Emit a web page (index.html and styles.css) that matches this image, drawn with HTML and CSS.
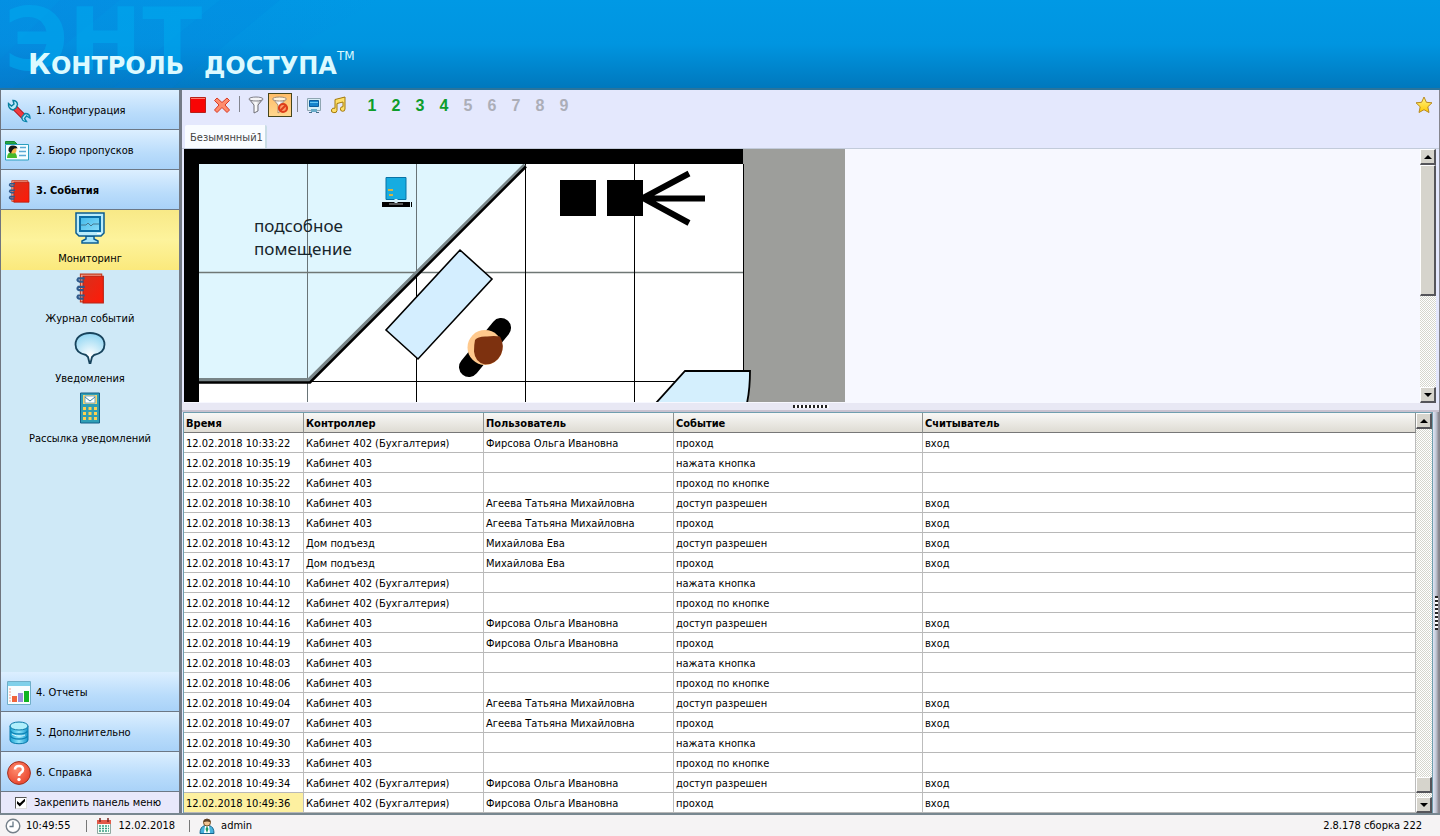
FILE: index.html
```html
<!DOCTYPE html>
<html lang="ru">
<head>
<meta charset="utf-8">
<title>Контроль доступа</title>
<link rel="stylesheet" href="styles.css">
</head>
<body>
<svg class="defs" aria-hidden="true">
  <defs>
    <linearGradient id="screen" x1="0" y1="0" x2="1" y2="1"><stop offset="0" stop-color="#3fb8ea"/><stop offset="1" stop-color="#8adcf8"/></linearGradient>
    <linearGradient id="cyl" x1="0" x2="1"><stop offset="0" stop-color="#1ba4d4"/><stop offset=".5" stop-color="#8fe4fb"/><stop offset="1" stop-color="#1596cc"/></linearGradient>
    <radialGradient id="bubble" cx=".5" cy=".75" r=".8"><stop offset="0" stop-color="#ffffff"/><stop offset="1" stop-color="#8ad3f2"/></radialGradient>
    <radialGradient id="help" cx=".4" cy=".35" r=".7"><stop offset="0" stop-color="#ff8b6d"/><stop offset="1" stop-color="#e8432c"/></radialGradient>
    <linearGradient id="book" x1="0" y1="0" x2="1" y2="1"><stop offset="0" stop-color="#d8301c"/><stop offset="1" stop-color="#ff1a08"/></linearGradient>
    <linearGradient id="gold" x1="0" y1="0" x2="0" y2="1"><stop offset="0" stop-color="#fff68a"/><stop offset="1" stop-color="#ffc800"/></linearGradient>
    <linearGradient id="metal" x1="0" x2="1"><stop offset="0" stop-color="#c9c9cf"/><stop offset=".5" stop-color="#ffffff"/><stop offset="1" stop-color="#8e8e96"/></linearGradient>
    <linearGradient id="ray" x1="0" x2="1"><stop offset="0" stop-color="#0b7fe0" stop-opacity=".35"/><stop offset="1" stop-color="#0b7fe0" stop-opacity="0"/></linearGradient>
    <symbol id="i-book" viewBox="0 0 28 30">
      <path d="M5 2h20v26H5z" fill="#f7a18c" stroke="#c53a1c"/>
      <path d="M7.500 4h19v25h-19z" fill="url(#book)" stroke="#b82010"/>
      <g fill="none" stroke="#2f5a8c" stroke-width="2"><path d="M9 6H3q-2 2 1 3h4M9 14H3q-2 2 1 3h4M9 22H3q-2 2 1 3h4"/></g>
    </symbol>
  </defs>
</svg>

<header class="banner">
  <svg class="banner-rays" viewBox="0 0 420 90" aria-hidden="true">
    <path d="M0 0h380L300 45l50 45H0z" fill="url(#ray)"/>
    <path d="M60 0h60L10 90H0V60z" fill="#0b7fe0" opacity=".15"/>
    <path d="M220 0h60L170 90h-60z" fill="#0b7fe0" opacity=".12"/>
  </svg>
  <span class="watermark" aria-hidden="true">ЭНТ</span>
  <h1 class="brand"><span><span class="cap">К</span>онтроль</span> <span>доступа<sup>TM</sup></span></h1>
</header>

<div class="workspace">
  <aside class="sidebar">
    <nav class="menu">
      <button class="section">
        <svg class="icon24" viewBox="0 0 24 24"><path d="M7 8l10 10" stroke="#a3101b" stroke-width="6"/><path d="M7 8l10 10" stroke="#f03a3e" stroke-width="4"/><path d="M1.500 4.500l3 2.500 2.500-2-1-3.500q4 0 4.500 4L9 9 6 11Q1 9.500 1.500 4.500z" fill="#b8edfb" stroke="#087f9f" stroke-width="1.400"/><path d="M15 18l3-3.500q5 0 5 4.500l-3.500-2-2 2.500 2 3q-5 0-4.500-4.500z" fill="#b8edfb" stroke="#0b86ad" stroke-width="1.400"/></svg>
        <span>1. Конфигурация</span>
      </button>
      <button class="section">
        <svg class="icon24 card" viewBox="0 0 24 24"><path d="M.5 5V2.500h9L12 5z" fill="#28a745" stroke="#168a36"/><path d="M.5 5.500h23v15.500H.5z" fill="#f4feff" stroke="#2a9fc0"/><path d="M2 19q0-6 5-6t5 6z" fill="#45b92a"/><circle cx="8" cy="11" r="3.500" fill="#f5b547"/><path d="M3.500 12Q3 6.500 8 6.500q4 0 4.500 3-5-1-6.500 5z" fill="#161616"/><path d="M15 8.500h6M14 12.500h7M14 16.500h7" stroke="#58a9d4" stroke-width="1.500"/></svg>
        <span>2. Бюро пропусков</span>
      </button>
      <button class="section current">
        <svg class="icon24"><use href="#i-book"/></svg>
        <span>3. События</span>
      </button>
      <div class="subitems">
        <button class="sub selected">
          <svg class="icon32" viewBox="0 0 32 32"><path d="M12 24h8v3l4 2v2H8v-2l4-2z" fill="#a6e6fb" stroke="#0c5f94" stroke-width="1.500"/><path d="M2 1h28v20l-3 3H5l-3-3z" fill="#b9ecfb" stroke="#0b5c90" stroke-width="1.500"/><path d="M6 5h20v14H6z" fill="url(#screen)" stroke="#0b6ea6" stroke-width="2"/><path d="M7 13h5l2-2 3 3 2-2h6" fill="none" stroke="#47788f"/><path d="M23 21.500h4" stroke="#fff"/></svg>
          <span>Мониторинг</span>
        </button>
        <button class="sub">
          <svg class="icon32"><use href="#i-book"/></svg>
          <span>Журнал событий</span>
        </button>
        <button class="sub">
          <svg class="icon32" viewBox="0 0 32 32"><path d="M16 1C7 1 1.500 6 1.500 12.500S7 22 12 23l2 2 1.500 6h1L18 25l2-2c5-1 10.500-4 10.500-10.500S25 1 16 1z" fill="url(#bubble)" stroke="#17435c" stroke-width="1.800"/></svg>
          <span>Уведомления</span>
        </button>
        <button class="sub">
          <svg class="icon32" viewBox="0 0 32 32"><path d="M6.500 1h19v30h-19z" fill="#2f9eb5" stroke="#145f87"/><path d="M9 3h14v9H9z" fill="#f7d56e"/><path d="M11 4h10v7H11z" fill="#fff" stroke="#77a8c0"/><path d="M11 5l5 4 5-4" fill="none" stroke="#3c83a7"/><g fill="#ffd04e"><path d="M9 15h3v3H9zM14.500 15h3v3h-3zM20 15h3v3h-3zM9 20h3v3H9zM14.500 20h3v3h-3zM20 20h3v3h-3zM9 25h3v3H9zM14.500 25h3v3h-3zM20 25h3v3h-3z"/></g></svg>
          <span>Рассылка уведомлений</span>
        </button>
      </div>
      <button class="section">
        <svg class="icon24" viewBox="0 0 24 24"><path d="M.5.5h23v23H.5z" fill="#f8fdff" stroke="#6faec8"/><path d="M1 1h22v4H1z" fill="#7fd0ea"/><path d="M2 8h2M2 11h2M2 14h2M2 17h2M2 20h2" stroke="#f0a090"/><path d="M5 15h5v6H5z" fill="#f0643c"/><path d="M11 12h5v9h-5z" fill="#9a90dc"/><path d="M17 10h5v11h-5z" fill="#12b321"/></svg>
        <span>4. Отчеты</span>
      </button>
      <button class="section">
        <svg class="icon24" viewBox="0 0 24 24"><path d="M3 5v14c0 5 18 5 18 0V5z" fill="url(#cyl)" stroke="#0878a8"/><ellipse cx="12" cy="5" rx="9" ry="4" fill="#b0effc" stroke="#0878a8"/><path d="M3.500 10c2 4 15 4 17 0M3.500 15c2 4 15 4 17 0" fill="none" stroke="#0e82b4" stroke-width="1.500"/><path d="M5 13c3 2 9 3 13 1" fill="none" stroke="#d8f8ff"/></svg>
        <span>5. Дополнительно</span>
      </button>
      <button class="section">
        <svg class="icon24" viewBox="0 0 24 24"><circle cx="12" cy="12" r="11.400" fill="url(#help)" stroke="#9c3020"/><path d="M8 8.500Q8 5 12 5t4 3.500q0 2-2 3.200-2 1.200-2 3.300" fill="none" stroke="#fff" stroke-width="2.600"/><circle cx="12" cy="18.500" r="1.700" fill="#fff"/></svg>
        <span>6. Справка</span>
      </button>
    </nav>
    <label class="pin"><input type="checkbox" checked><span>Закрепить панель меню</span></label>
  </aside>

  <main class="main">
    <div class="toolbar">
      <button class="tool" aria-label="Стоп"><svg class="icon18" viewBox="0 0 18 18"><path d="M1.500 1.500h15v15h-15z" fill="#f80505" stroke="#b82018"/><path d="M2 2.500h14" stroke="#ff7b70"/></svg></button>
      <button class="tool" aria-label="Удалить"><svg class="icon18" viewBox="0 0 18 18"><path d="M4 2l5 4.500L14 2l2.500 2.500L12 9l4.500 5-2.500 2.500-5-5-5 5L1.500 14 6 9 1.500 4.500z" fill="#ff8c6c" stroke="#d83a25"/></svg></button>
      <span class="divider"></span>
      <button class="tool" aria-label="Фильтр"><svg class="icon18" viewBox="0 0 18 18"><path d="M2 3l5 6v8l4-2V9l5-6z" fill="url(#metal)" stroke="#707078"/><ellipse cx="9" cy="3" rx="7" ry="2" fill="#f4f4f6" stroke="#808088"/></svg></button>
      <button class="tool pressed" aria-label="Сбросить фильтр"><svg class="icon18" viewBox="0 0 18 18"><path d="M2 3l5 6v8l3-2V9l5-6z" fill="url(#metal)" stroke="#b09070"/><ellipse cx="8.500" cy="3" rx="7" ry="2" fill="#fff4dc" stroke="#a08c78"/><circle cx="12" cy="12" r="4" fill="#ff9c68" stroke="#dd3e1b" stroke-width="2.200"/><path d="M9 15l6-6" stroke="#dd3e1b" stroke-width="2"/></svg></button>
      <span class="divider"></span>
      <button class="tool" aria-label="Монитор"><svg class="icon18" viewBox="0 0 18 18"><path d="M2.500 2.500h13v12h-13z" fill="#d8eef6" stroke="#8fa6b2"/><path d="M4.500 4.500h9v6h-9z" fill="#1684cc" stroke="#0b5c9c"/><path d="M5 6.500h8" stroke="#66c7f4"/><path d="M6 13h6v3H6z" fill="#68abc8"/><path d="M4 16.500h3M11 16.500h3" stroke="#426e88"/></svg></button>
      <button class="tool" aria-label="Звук"><svg class="icon18" viewBox="0 0 18 18"><path d="M6 3.500l10-2.500v12a2.300 2.300 0 1 1-2-2.300V6L8 7.500v7a2.800 2.300 0 1 1-2-2.300z" fill="#ffe06a" stroke="#a27808"/></svg></button>
      <div class="plans">
        <button class="plan-no on">1</button><button class="plan-no on">2</button><button class="plan-no on">3</button><button class="plan-no on">4</button><button class="plan-no">5</button><button class="plan-no">6</button><button class="plan-no">7</button><button class="plan-no">8</button><button class="plan-no">9</button>
      </div>
      <button class="tool favorite" aria-label="Избранное"><svg class="icon18" viewBox="0 0 18 18"><path d="M9 1l2.400 5.300 5.600.5-4.200 4 1.200 5.700L9 13.700 4 16.500l1.200-5.700-4.200-4 5.600-.5z" fill="url(#gold)" stroke="#b88a22"/></svg></button>
    </div>
    <div class="tabs"><button class="tab">Безымянный1</button></div>

    <section class="viewer">
      <div class="canvas">
        <svg class="plan" viewBox="184 149 661 253" role="img" aria-label="План помещения">
          <path d="M184 149h559v253H184z" fill="#fff"/>
          <path d="M743 149h102v253H743z" fill="#9d9e9b"/>
          <path d="M199 164h327L309 381H199z" fill="#dff6fe"/>
          <path d="M307.500 164v238M416.500 164v110" stroke="#697477" fill="none"/>
          <path d="M199 272.500h544" stroke="#6f7775" stroke-width="1.500"/>
          <path d="M416.500 275v127M525.500 164v238M634.500 164v238M743.500 164v238M309 381.500h434" stroke="#000" fill="none"/>
          <path d="M199 380h110L525 165" fill="none" stroke="#788487" stroke-width="4"/>
          <path d="M199 382.500h111L526 166.500" fill="none" stroke="#000" stroke-width="2.500"/>
          <path d="M184 149h559v15H199v238h-15z" fill="#000"/>
          <path d="M460 250l32 29-74 80-32-29z" fill="#d4eeff" stroke="#000" stroke-width="1.600"/>
          <path d="M656 403l29-32h65q0 18-3 32z" fill="#d4effd" stroke="#000" stroke-width="1.800"/>
          <path d="M560 180h36v36h-36zM607 180h36v36h-36z"/>
          <path d="M689 173.500L643 198l46 25M643 198.500h62" fill="none" stroke="#000" stroke-width="6"/>
          <path d="M469 367l32-39" stroke="#000" stroke-width="20" stroke-linecap="round"/>
          <circle cx="485" cy="347.500" r="17.500" fill="#ffc98d"/>
          <path d="M475 340q3-4 12-3.500 7-1 13 0 5 9 1 18-5 10-16 10-10-2-11-13 0-7 1-11.500z" fill="#7d310f"/>
          <path d="M386 177.500h20v22h-20z" fill="#16ace0" stroke="#0873a5"/>
          <path d="M388 189h5v2h-5zM389 194h4v2h-4z" fill="#d2b444"/>
          <path d="M382 202h28v5h-28zM411 202h1v5h-1z"/><path d="M389 204h14" stroke="#a8a8a8"/><path d="M396 199v4" stroke="#d5eef6" stroke-width="3"/>
          <text class="room-name" x="254" y="232">подсобное</text>
          <text class="room-name" x="254" y="255">помещение</text>
        </svg>
      </div>
      <div class="scrollbar">
        <button class="arrow" aria-label="Вверх"><svg viewBox="0 0 8 4"><path d="M4 0l4 4H0z"/></svg></button>
        <span class="thumb tall"></span>
        <span class="track"></span>
        <button class="arrow" aria-label="Вниз"><svg viewBox="0 0 8 4"><path d="M0 0h8L4 4z"/></svg></button>
      </div>
    </section>
    <div class="splitter"><span class="grip"></span></div>

    <div class="lower">
      <section class="log">
        <table>
          <colgroup><col class="c-time"><col class="c-ctrl"><col class="c-user"><col class="c-event"><col></colgroup>
          <thead><tr><th>Время</th><th>Контроллер</th><th>Пользователь</th><th>Событие</th><th>Считыватель</th></tr></thead>
          <tbody>
            <tr><td>12.02.2018 10:33:22</td><td>Кабинет 402 (Бухгалтерия)</td><td>Фирсова Ольга Ивановна</td><td>проход</td><td>вход</td></tr>
            <tr><td>12.02.2018 10:35:19</td><td>Кабинет 403</td><td></td><td>нажата кнопка</td><td></td></tr>
            <tr><td>12.02.2018 10:35:22</td><td>Кабинет 403</td><td></td><td>проход по кнопке</td><td></td></tr>
            <tr><td>12.02.2018 10:38:10</td><td>Кабинет 403</td><td>Агеева Татьяна Михайловна</td><td>доступ разрешен</td><td>вход</td></tr>
            <tr><td>12.02.2018 10:38:13</td><td>Кабинет 403</td><td>Агеева Татьяна Михайловна</td><td>проход</td><td>вход</td></tr>
            <tr><td>12.02.2018 10:43:12</td><td>Дом подъезд</td><td>Михайлова Ева</td><td>доступ разрешен</td><td>вход</td></tr>
            <tr><td>12.02.2018 10:43:17</td><td>Дом подъезд</td><td>Михайлова Ева</td><td>проход</td><td>вход</td></tr>
            <tr><td>12.02.2018 10:44:10</td><td>Кабинет 402 (Бухгалтерия)</td><td></td><td>нажата кнопка</td><td></td></tr>
            <tr><td>12.02.2018 10:44:12</td><td>Кабинет 402 (Бухгалтерия)</td><td></td><td>проход по кнопке</td><td></td></tr>
            <tr><td>12.02.2018 10:44:16</td><td>Кабинет 403</td><td>Фирсова Ольга Ивановна</td><td>доступ разрешен</td><td>вход</td></tr>
            <tr><td>12.02.2018 10:44:19</td><td>Кабинет 403</td><td>Фирсова Ольга Ивановна</td><td>проход</td><td>вход</td></tr>
            <tr><td>12.02.2018 10:48:03</td><td>Кабинет 403</td><td></td><td>нажата кнопка</td><td></td></tr>
            <tr><td>12.02.2018 10:48:06</td><td>Кабинет 403</td><td></td><td>проход по кнопке</td><td></td></tr>
            <tr><td>12.02.2018 10:49:04</td><td>Кабинет 403</td><td>Агеева Татьяна Михайловна</td><td>доступ разрешен</td><td>вход</td></tr>
            <tr><td>12.02.2018 10:49:07</td><td>Кабинет 403</td><td>Агеева Татьяна Михайловна</td><td>проход</td><td>вход</td></tr>
            <tr><td>12.02.2018 10:49:30</td><td>Кабинет 403</td><td></td><td>нажата кнопка</td><td></td></tr>
            <tr><td>12.02.2018 10:49:33</td><td>Кабинет 403</td><td></td><td>проход по кнопке</td><td></td></tr>
            <tr><td>12.02.2018 10:49:34</td><td>Кабинет 402 (Бухгалтерия)</td><td>Фирсова Ольга Ивановна</td><td>доступ разрешен</td><td>вход</td></tr>
            <tr><td class="focused">12.02.2018 10:49:36</td><td>Кабинет 402 (Бухгалтерия)</td><td>Фирсова Ольга Ивановна</td><td>проход</td><td>вход</td></tr>
          </tbody>
        </table>
        <div class="scrollbar">
          <button class="arrow" aria-label="Вверх"><svg viewBox="0 0 8 4"><path d="M4 0l4 4H0z"/></svg></button>
          <span class="track"></span>
          <span class="thumb"></span>
          <span class="gap"></span>
          <button class="arrow" aria-label="Вниз"><svg viewBox="0 0 8 4"><path d="M0 0h8L4 4z"/></svg></button>
        </div>
      </section>
      <div class="splitter-side"><span class="grip upright"></span></div>
    </div>
  </main>
</div>

<footer class="status">
  <svg class="icon16" viewBox="0 0 16 16"><circle cx="8" cy="8" r="6.800" fill="#fff" stroke="#75808a" stroke-width="1.400"/><path d="M8 3.500v5H4.500" fill="none" stroke="#657886" stroke-width="1.300"/></svg>
  <span class="status-time">10:49:55</span>
  <span class="bar"></span>
  <svg class="icon16" viewBox="0 0 16 16"><path d="M1.500 2.500h13v13h-13z" fill="#f4fff8" stroke="#8fa8a0"/><path d="M1 2h14v4H1z" fill="#e35a49"/><path d="M4 0v4M12 0v4" stroke="#7b2620" stroke-width="1.500"/><path d="M3 8h10M3 10.500h10M3 13h10" stroke="#379e81" stroke-width="1.500" stroke-dasharray="2 1"/></svg>
  <span class="status-date">12.02.2018</span>
  <span class="bar"></span>
  <svg class="icon16" viewBox="0 0 16 16"><path d="M1 15.500q0-7 5-8h4q5 1 5 8z" fill="#47b2dd" stroke="#17668e"/><path d="M6 8h4l1 7H5z" fill="#fff"/><path d="M8 8l1.500 3L8 15l-1.500-4z" fill="#1f9860"/><circle cx="8" cy="4.500" r="3.500" fill="#f2c491" stroke="#735129"/><path d="M4.500 4.500Q4 1 8 1t3.500 3.500Q8 2.500 4.500 4.500z" fill="#5e4022"/></svg>
  <span>admin</span>
  <span class="version">2.8.178 сборка 222</span>
</footer>
</body>
</html>
```

FILE: styles.css
```css
* { box-sizing: border-box; }

body {
  margin: 0;
  min-height: 100vh;
  display: flex;
  flex-direction: column;
  font-family: "DejaVu Sans Condensed", "Noto Sans", sans-serif;
  font-size: 11px;
  line-height: 14px;
  color: #000;
  background: #f5f3f4;
}

button {
  margin: 0;
  padding: 0;
  border: 0;
  background: none;
  font: inherit;
  color: inherit;
}

svg { display: block; flex: none; }
.defs { position: absolute; width: 0; height: 0; }
.icon16 { width: 16px; height: 16px; }
.icon18 { width: 18px; height: 18px; }
.icon24 { width: 24px; height: 24px; }
.icon32 { width: 32px; height: 32px; }

/* Banner */
.banner {
  position: relative;
  height: 90px;
  overflow: hidden;
  display: flex;
  align-items: flex-end;
  padding: 0 28px 6px;
  background: linear-gradient(#0099e5, #0095e0 50%, #0078bd);
  border-bottom: 2px solid #2a749c;
}
.banner-rays { position: absolute; left: 0; top: 0; width: 420px; height: 90px; }
.watermark {
  position: absolute;
  left: 4px;
  top: -4px;
  font-family: "DejaVu Sans", sans-serif;
  font-weight: bold;
  font-size: 88px;
  line-height: 88px;
  color: #00a8ee;
  opacity: .6;
}
.brand {
  position: relative;
  display: flex;
  align-items: baseline;
  gap: 20px;
  margin: 0;
  font-family: "DejaVu Sans", sans-serif;
  font-weight: bold;
  font-size: 24px;
  line-height: 32px;
  text-transform: uppercase;
  color: #dcfaff;
  white-space: nowrap;
}
.cap { font-size: 28px; }
.brand sup { font-size: 12px; line-height: 12px; font-weight: normal; vertical-align: top; }

.workspace { flex: 1; display: flex; min-height: 0; }

/* Sidebar */
.sidebar {
  width: 182px;
  flex: none;
  display: flex;
  flex-direction: column;
  border-left: 1px solid #70757e;
  border-right: 3px solid #737a85;
  background: #e8e8fb;
}
.menu { flex: 1; display: flex; flex-direction: column; background: #cfe9f7; }
.section {
  height: 40px;
  flex: none;
  display: flex;
  align-items: center;
  gap: 5px;
  padding: 2px 0 0 6px;
  text-align: left;
  background: linear-gradient(#dcefff, #b9dcfb 60%, #a9d2f8);
  border-bottom: 1px solid #6c7886;
}
.section.current { font-weight: bold; }
.card { margin-left: -2px; margin-right: 2px; }
.subitems { flex: 1; display: flex; flex-direction: column; }
.sub {
  height: 60px;
  display: flex;
  flex-direction: column;
  align-items: center;
  justify-content: space-between;
  padding: 2px 0 4px;
}
.sub.selected { background: linear-gradient(#f8e987, #fdf39c 50%, #fbe97c); }
.pin {
  height: 21px;
  display: flex;
  align-items: center;
  gap: 7px;
  padding-left: 14px;
}
.pin input {
  appearance: none;
  width: 12px;
  height: 12px;
  margin: 0;
  border: 1px solid #555;
  border-right-color: #ddd;
  border-bottom-color: #ddd;
  background: #fff;
  display: grid;
  place-items: center;
}
.pin input:checked::before {
  content: "";
  width: 8px;
  height: 8px;
  background: #000;
  clip-path: polygon(0 30%, 35% 60%, 100% 0, 100% 35%, 35% 100%, 0 65%);
}

/* Main */
.main { flex: 1; min-width: 0; display: flex; flex-direction: column; background: #e4e8fd; border-right: 1px solid #86868e; }
.toolbar { display: flex; align-items: center; padding: 3px 3px 3px 4px; }
.tool { width: 24px; height: 24px; display: grid; place-items: center; }
.tool.pressed { background: linear-gradient(#ffbd68, #ffd78e); border: 1px solid #45451c; }
.divider { width: 1px; height: 16px; margin: -2px 4px 0 5px; background: #83858f; }
.plans { display: flex; margin-left: 10px; }
.plan-no {
  width: 24px;
  height: 24px;
  padding-top: 2px;
  font: bold 16px "Liberation Sans", sans-serif;
  color: #acaeb8;
}
.plan-no.on { color: #0d9d2b; }
.favorite { margin-left: auto; }
.tabs { display: flex; margin-top: 5px; padding-left: 3px; height: 24px; border-bottom: 1px solid #c2cbda; }
.tab {
  padding: 3px 2px 0 5px;
  color: #444;
  background: #f9fcff;
  border-right: 2px solid #c9dce5;
  border-radius: 2px 2px 0 0;
}

.viewer { flex: 1; min-height: 253px; display: flex; padding: 0 3px 0 2px; background: #e4e8fd; }
.canvas { flex: 1; min-width: 0; overflow: hidden; background: #f7f8ff; }
.plan { width: 661px; height: 253px; }
.room-name { font: 17px "Noto Sans", sans-serif; fill: #17252b; }

.scrollbar {
  width: 16px;
  flex: none;
  display: flex;
  flex-direction: column;
  background: repeating-conic-gradient(#d5d6cd 0 25%, #fff 0 50%) 0 0 / 2px 2px;
}
.arrow, .thumb {
  height: 16px;
  flex: none;
  background: #d6d4cc;
  border: 1px solid #fff;
  border-right: 2px solid #55555a;
  border-bottom: 2px solid #55555a;
}
.arrow { display: grid; place-items: center; }
.arrow svg { width: 8px; height: 4px; }
.thumb.tall { height: 131px; }
.track { flex: 1; }
.gap { height: 4px; }

.splitter {
  height: 9px;
  display: flex;
  justify-content: center;
  align-items: center;
  background: #e8e8f4;
  border-bottom: 2px solid #c8c2d0;
}
.grip { width: 36px; height: 3px; background: repeating-linear-gradient(90deg, #222 0 2px, #fff 2px 4px); }
.grip.upright { width: 3px; height: 34px; background: repeating-linear-gradient(#222 0 2px, #fff 2px 4px); }

.lower { display: flex; padding-left: 1px; }
.log { flex: 1; min-width: 0; display: flex; background: #fff; border: 1px solid #6f9eae; border-bottom-width: 0; }
.splitter-side {
  width: 6px;
  display: flex;
  align-items: center;
  justify-content: center;
  background: linear-gradient(90deg, #e1e5f5, #c1c7d5 50%, #868087);
}

table { flex: 1; table-layout: fixed; border-collapse: separate; border-spacing: 0; background: #fff; }
.c-time { width: 120px; }
.c-ctrl { width: 180px; }
.c-user { width: 190px; }
.c-event { width: 249px; }
th, td {
  height: 20px;
  padding: 2px 2px 0;
  text-align: left;
  white-space: nowrap;
  border-right: 1px solid #bcbcbc;
  border-bottom: 1px solid #b8b8b8;
}
th { background: linear-gradient(#f8f8f6, #dedbd3); border-right-color: #8f9290; border-bottom-color: #777; }
td.focused { background: #fdf0a0; }

/* Status bar */
.status {
  height: 23px;
  flex: none;
  display: flex;
  align-items: center;
  gap: 5px;
  padding: 0 18px 0 5px;
  border-top: 2px solid #788790;
}
.bar { width: 1px; height: 12px; background: #777; }
.status-time { margin-right: 11px; }
.status-date { margin-right: 9px; }
.bar + .icon16 { margin-left: 4px; margin-right: 1px; }
.version { margin-left: auto; }
```
